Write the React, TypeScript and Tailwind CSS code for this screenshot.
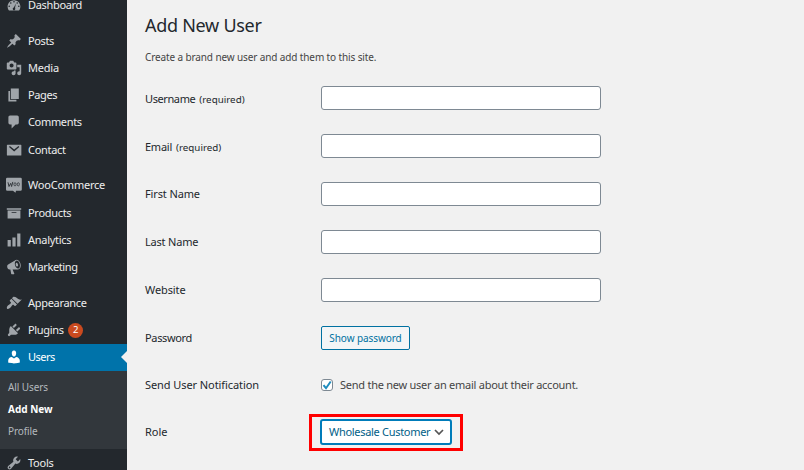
import React from "react";

type IconProps = { d: string; className?: string };

function Icon({ d, className = "text-[#a0a5aa]" }: IconProps) {
  return (
    <svg viewBox="0 0 20 20" className={"size-4 shrink-0 " + className} fill="currentColor" fillRule="evenodd">
      <path d={d} />
    </svg>
  );
}

const icons = {
  dashboard:
    "M3.76 17h12.48c1.1-1.37 1.76-3.11 1.76-5 0-4.42-3.58-8-8-8s-8 3.58-8 8c0 1.89.66 3.63 1.76 5zM10 5a1 1 0 1 1 0 2 1 1 0 0 1 0-2zM6 6.5a1 1 0 1 1 0 2 1 1 0 0 1 0-2zM14 6.5a1 1 0 1 1 0 2 1 1 0 0 1 0-2zM4 10.5a1 1 0 1 1 0 2 1 1 0 0 1 0-2zM16 10.5a1 1 0 1 1 0 2 1 1 0 0 1 0-2zM12.3 8.2l-1 5.6a1.6 1.6 0 1 1-1.5-.6z",
  post: "M10.44 3.02l1.82-1.82 6.36 6.35-1.83 1.82c-1.05-.68-2.48-.57-3.41.36l-.75.75c-.92.93-1.04 2.35-.35 3.41l-1.83 1.82-2.41-2.41-2.8 2.79c-.42.42-3.38 2.71-3.8 2.29s1.86-3.39 2.28-3.81l2.79-2.79L4.1 9.36l1.83-1.82c1.05.69 2.48.57 3.4-.36l.75-.75c.93-.92 1.05-2.35.36-3.41z",
  media:
    "M13 11V4c0-.55-.45-1-1-1h-1.67L9 1H5L3.67 3H2c-.55 0-1 .45-1 1v7c0 .55.45 1 1 1h10c.55 0 1-.45 1-1zM7 4.5c1.38 0 2.5 1.12 2.5 2.5S8.38 9.5 7 9.5 4.5 8.38 4.5 7 5.62 4.5 7 4.5zM14 6h5v10.5c0 1.38-1.12 2.5-2.5 2.5S14 17.88 14 16.5s1.12-2.5 2.5-2.5c.17 0 .34.02.5.05V9h-3V6zm-4 8.05V13h2v3.5c0 1.38-1.12 2.5-2.5 2.5S7 17.88 7 16.5 8.12 14 9.5 14c.17 0 .34.02.5.05z",
  page: "M6 15V2h10v13H6zm-1 1h8v2H3V5h2v11z",
  comments:
    "M5 2h9c1.1 0 2 .9 2 2v7c0 1.1-.9 2-2 2h-2l-5 5v-5H5c-1.1 0-2-.9-2-2V4c0-1.1.9-2 2-2z",
  email:
    "M1.800 3.500h16.700a.7.7 0 0 1 .7.7v12a.7.7 0 0 1-.7.7H1.800a.7.7 0 0 1-.7-.7v-12a.7.7 0 0 1 .7-.7zM3.800 6.300l6.400 5.600 6.400-5.600-1-1.200-5.400 4.300-5.400-4.300z",
  archive: "M19 4v2H1V4h18zM2 7h16v10H2V7zm11 3V9H7v1h6z",
  chart: "M18 18V2h-4v16h4zm-6 0V7H8v11h4zm-6 0v-8H2v8h4z",
  megaphone:
    "M18.15 5.94c.46 1.62.38 3.22-.02 4.48-.42 1.28-1.26 2.18-2.3 2.48-.16.06-.26.06-.4.06-.06.02-.12.02-.18.02-.06.02-.14.02-.22.02h-6.8l2.22 5.5c.02.14-.06.26-.14.34-.08.1-.24.16-.34.16H6.95c-.1 0-.26-.06-.34-.16-.08-.08-.16-.2-.14-.34l-1-5.5H4.25l-.02-.02c-.5.06-1.08-.18-1.54-.62s-.88-1.08-1.06-1.88c-.24-.8-.2-1.56-.02-2.2.18-.62.58-1.08 1.06-1.3l.02-.02 9-5.4c.1-.06.18-.1.24-.16.06-.04.14-.08.24-.12.16-.08.28-.12.5-.18 1.04-.3 2.24.1 3.22.98s1.84 2.24 2.26 3.86zm-2.58 5.98h-.02c.4-.1.74-.34 1.04-.7.58-.7.86-1.76.86-3.04 0-.64-.1-1.3-.28-1.98-.34-1.36-1.02-2.5-1.78-3.24s-1.68-1.1-2.46-.88c-.82.22-1.4.96-1.7 2-.32 1.04-.28 2.36.06 3.72.38 1.36 1 2.5 1.8 3.24.78.74 1.62 1.1 2.48.88zm-2.54-7.08c.22-.04.42-.02.62.04.38.16.76.48 1.02 1s.42 1.2.42 1.78c0 .3-.04.56-.12.8-.18.48-.44.84-.86.94-.34.1-.8-.06-1.14-.4s-.64-.86-.78-1.5c-.18-.62-.12-1.24.02-1.72s.48-.84.82-.94z",
  appearance:
    "M14.48 11.06L7.41 3.99l1.5-1.5c.5-.56 2.3-.47 3.51.32 1.21.8 1.43 1.28 2.91 2.1 1.18.64 2.45 1.26 4.45.85zm-.71.71L6.7 4.7 4.93 6.47c-.39.39-.39 1.02 0 1.41l1.06 1.06c.39.39.39 1.03 0 1.42-.6.6-1.43 1.11-2.21 1.69-.35.26-.7.53-1.01.84C1.43 14.23.4 16.08 1.4 17.07c.99 1 2.84-.03 4.18-1.36.31-.31.58-.66.85-1.02.57-.78 1.08-1.61 1.69-2.21.39-.39 1.02-.39 1.41 0l1.06 1.06c.39.39 1.02.39 1.41 0z",
  plugins:
    "M13.11 4.36L9.87 7.6 8 5.73l3.24-3.24c.35-.34 1.05-.2 1.56.32.52.51.66 1.21.31 1.55zm-8 1.77l.91-1.12 9.01 9.01-1.19.84c-.71.71-2.63 1.16-3.82 1.16H6.14L4.9 17.26c-.59.59-1.54.59-2.12 0-.59-.58-.59-1.53 0-2.12l1.24-1.24v-3.88c0-1.13.4-3.19 1.09-3.89zm7.26 3.97l3.24-3.24c.34-.35 1.04-.21 1.55.31.52.51.66 1.21.31 1.55l-3.24 3.25z",
  users:
    "M10 9.25c-2.27 0-2.73-3.44-2.73-3.44C7 4.02 7.82 2 9.97 2c2.16 0 2.98 2.02 2.71 3.81 0 0-.41 3.44-2.68 3.44zm0 2.57L12.72 10c2.39 0 4.52 2.33 4.52 4.53v2.49s-3.65 1.13-7.24 1.13c-3.65 0-7.24-1.13-7.24-1.13v-2.49c0-2.25 1.94-4.48 4.47-4.48z",
  tools:
    "M16.68 9.77c-1.34 1.34-3.3 1.67-4.95.99l-5.41 6.52c-.99.99-2.59.99-3.58 0s-.99-2.59 0-3.57l6.52-5.42c-.68-1.65-.35-3.61.99-4.95 1.28-1.28 3.12-1.62 4.72-1.06l-2.89 2.89 2.82 2.82 2.86-2.87c.53 1.58.18 3.39-1.08 4.65zM3.81 16.21c.4.39 1.04.39 1.43 0 .4-.4.4-1.04 0-1.43-.39-.4-1.03-.4-1.43 0-.39.39-.39 1.03 0 1.43z",
};

function WooIcon() {
  return (
    <svg viewBox="0 0 16 16" className="size-4 shrink-0" fill="none">
      <path
        d="M1.300.8h13.200A1.300 1.300 0 0 1 15.800 2.100v10.400a1.300 1.300 0 0 1-1.300 1.300H10l-.5 2-2.600-2H1.300A1.300 1.300 0 0 1 0 12.500V2.100A1.300 1.300 0 0 1 1.300.8z"
        fill="#a0a5aa"
      />
      <path d="M2 5.300l1 4.200 1.700-3.200.9 3.200 1.200-4.600" stroke="#32373c" strokeWidth="1" />
      <ellipse cx="9" cy="7.300" rx="1.100" ry="1.600" stroke="#32373c" strokeWidth=".8" />
      <ellipse cx="12.300" cy="7.300" rx="1.100" ry="1.600" stroke="#32373c" strokeWidth=".8" />
    </svg>
  );
}

type Item = { label: string; icon: React.ReactNode; track: string; badge?: string };
type Group = { gap: string; items: Item[] };

const groups: Group[] = [
  {
    gap: "mb-[8.8px]",
    items: [{ label: "Dashboard", icon: <Icon d={icons.dashboard} />, track: "tracking-[-0.32px]" }],
  },
  {
    gap: "mb-[8.5px]",
    items: [
      { label: "Posts", icon: <Icon d={icons.post} />, track: "tracking-[-0.4px]" },
      { label: "Media", icon: <Icon d={icons.media} />, track: "tracking-[-0.2px]" },
      { label: "Pages", icon: <Icon d={icons.page} />, track: "tracking-[-0.4px]" },
      { label: "Comments", icon: <Icon d={icons.comments} />, track: "tracking-[-0.33px]" },
      { label: "Contact", icon: <Icon d={icons.email} />, track: "tracking-[-0.3px]" },
    ],
  },
  {
    gap: "mb-[9.1px]",
    items: [
      { label: "WooCommerce", icon: <WooIcon />, track: "tracking-[-0.22px]" },
      { label: "Products", icon: <Icon d={icons.archive} />, track: "tracking-[-0.3px]" },
      { label: "Analytics", icon: <Icon d={icons.chart} />, track: "tracking-[-0.27px]" },
      { label: "Marketing", icon: <Icon d={icons.megaphone} />, track: "tracking-[-0.4px]" },
    ],
  },
  {
    gap: "mb-0",
    items: [
      { label: "Appearance", icon: <Icon d={icons.appearance} />, track: "tracking-[-0.3px]" },
      { label: "Plugins", icon: <Icon d={icons.plugins} />, track: "tracking-[-0.33px]", badge: "2" },
    ],
  },
];

function MenuItem({ item }: { item: Item }) {
  return (
    <a className="flex h-[27.2px] items-center gap-[6px] pl-[6px] text-[11px] leading-[16px] text-[#eee]">
      {item.icon}
      <span className={item.track}>{item.label}</span>
      {item.badge && (
        <span className="-ml-[1.500px] flex size-[15px] items-center justify-center rounded-full bg-[#ca4a1f] text-[9.5px] text-white">
          {item.badge}
        </span>
      )}
    </a>
  );
}

function Sidebar() {
  return (
    <nav className="h-[470px] w-[127px] shrink-0 overflow-hidden bg-[#23282d]">
      <div className="-mt-[8.700px] flex flex-col">
        {groups.map((group, i) => (
          <div key={i} className={group.gap}>
            {group.items.map((item) => (
              <MenuItem key={item.label} item={item} />
            ))}
          </div>
        ))}
        <a className="flex h-[27px] items-center gap-[6px] bg-[#0073aa] pl-[6px] text-[11px] leading-[16px] text-white">
          <Icon d={icons.users} className="text-white" />
          <span className="tracking-[-0.5px]">Users</span>
          <span className="ml-auto border-y-[6.5px] border-r-[6.5px] border-y-transparent border-r-[#f1f1f1]" />
        </a>
        <div className="flex h-[78px] flex-col bg-[#32373c] pt-[5.5px] pl-[8px] text-[10px] leading-[22px] text-[#b4b9be]">
          <a className="tracking-[-0.1px]">All Users</a>
          <a className="font-bold text-white">Add New</a>
          <a className="tracking-[-0.1px]">Profile</a>
        </div>
        <MenuItem item={{ label: "Tools", icon: <Icon d={icons.tools} />, track: "tracking-[-0.25px]" }} />
      </div>
    </nav>
  );
}

type FieldProps = { label: string; track: string; note?: string };

function Field({ label, track, note }: FieldProps) {
  return (
    <label className="flex h-12 items-center">
      <span className={"w-[176px] text-[#23282d] " + (note ? "pt-[2px]" : "")}>
        <span className={track}>{label}</span>
        {note && <span className="ml-[4px] text-[9.8px]">{note}</span>}
      </span>
      <input className="h-6 w-[280px] rounded-[3px] border border-[#7e8993] bg-white" />
    </label>
  );
}

export default function App() {
  return (
    <div className="flex h-[470px] w-[804px] overflow-hidden bg-[#f1f1f1] font-['Noto_Sans',sans-serif]">
      <Sidebar />
      <main className="flex-1 pt-[12px] pl-[18px] text-[11px] text-[#444]">
        <h1 className="h-[26px] text-[18px] leading-[26px] tracking-[-0.28px] text-[#23282d]">Add New User</h1>
        <p className="mt-[10px] h-[18px] text-[10px] leading-[18px] tracking-[-0.12px]">
          Create a brand new user and add them to this site.
        </p>
        <div className="mt-[8px] flex flex-col">
          <Field label="Username" note="(required)" track="tracking-[-0.4px]" />
          <Field label="Email" note="(required)" track="tracking-[-0.25px]" />
          <Field label="First Name" track="tracking-[-0.13px]" />
          <Field label="Last Name" track="tracking-[-0.2px]" />
          <Field label="Website" track="tracking-[-0.1px]" />
          <div className="flex h-12 items-center">
            <span className="w-[176px] tracking-[-0.35px] text-[#23282d]">Password</span>
            <button className="h-6 w-[89px] rounded-[2px] border border-[#0071a1] bg-[#f3f5f6] text-[10px] tracking-[-0.08px] whitespace-nowrap text-[#0071a1]">
              Show password
            </button>
          </div>
          <div className="flex h-[46px] items-center">
            <span className="w-[176px] tracking-[-0.08px] text-[#23282d]">Send User Notification</span>
            <span className="flex size-[12px] items-center justify-center rounded-[3px] border border-[#7e8993] bg-white">
              <svg viewBox="0 0 12 12" className="size-3 shrink-0" fill="none" stroke="#1e8cbe" strokeWidth="2">
                <path d="M2.500 6.200l2.500 3 4.700-6.700" />
              </svg>
            </span>
            <span className="ml-[7px] tracking-[-0.25px]">Send the new user an email about their account.</span>
          </div>
          <div className="flex h-12 items-center">
            <span className="w-[164px] text-[#23282d]">Role</span>
            <span className="flex h-[37px] w-[154px] items-center border-[3px] border-[#ff0000] pl-[8px]">
              <span className="flex h-[26px] w-[132px] items-center rounded-[3px] border-2 border-[#007cba] bg-white pl-[7px] tracking-[-0.3px] whitespace-nowrap text-[#016087]">
                Wholesale Customer
                <svg viewBox="0 0 10 10" className="ml-[4px] size-[10px] shrink-0" fill="none" stroke="#555" strokeWidth="1.7">
                  <path d="M1 3l4 4 4-4" />
                </svg>
              </span>
            </span>
          </div>
        </div>
      </main>
    </div>
  );
}
